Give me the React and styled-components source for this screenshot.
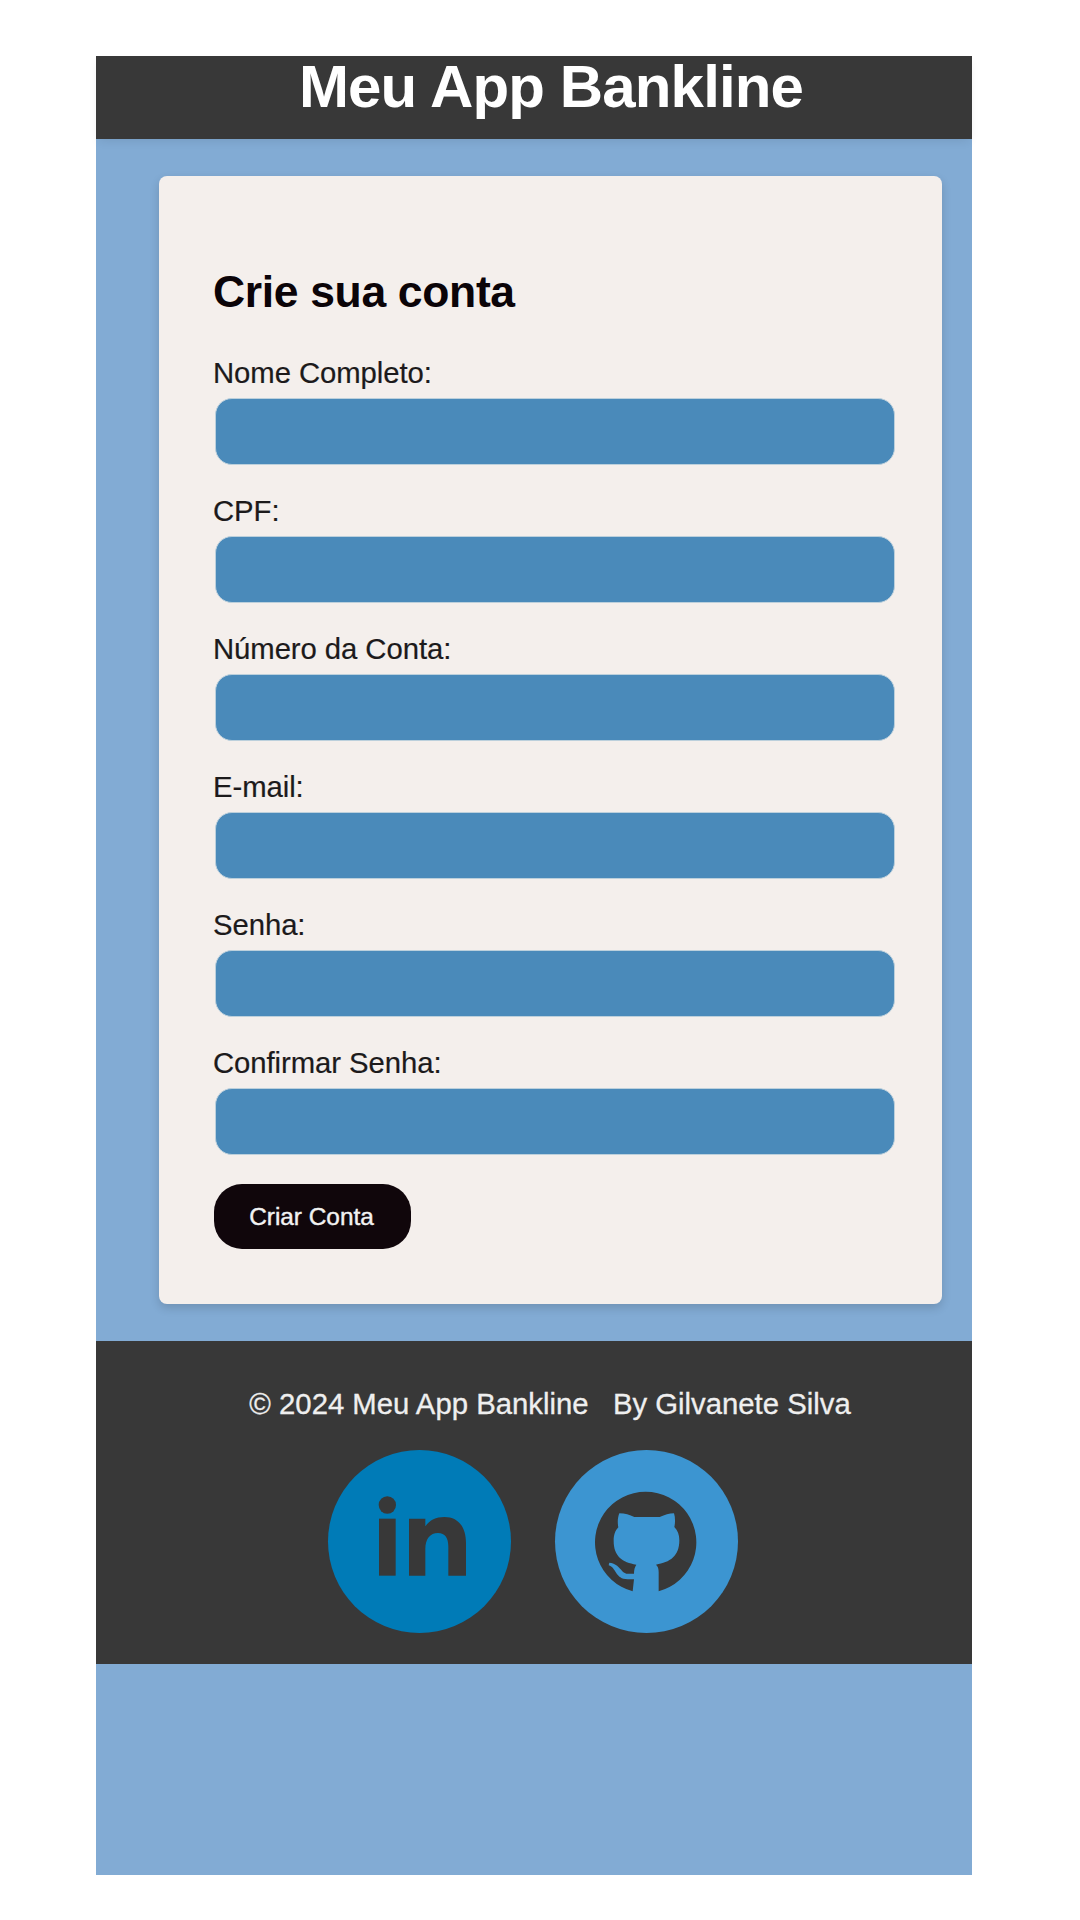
import React from "react";
import styled, { createGlobalStyle } from "styled-components";

const GlobalStyle = createGlobalStyle`
  * { box-sizing: border-box; }
  body {
    margin: 0;
    background: #fff;
    font-family: "Liberation Sans", Arial, sans-serif;
  }
`;

const Page = styled.div`
  display: flex;
  flex-direction: column;
  width: 876px;
  height: 1819px;
  margin: 56px 0 0 96px;
  background: #82abd4;
`;

const Header = styled.header`
  flex: none;
  height: 83px;
  padding: 1px 0 0 34px;
  background: #383838;
  box-shadow: 0 4px 10px -3px rgba(0, 0, 0, 0.1);
  text-align: center;
`;

const Title = styled.h1`
  margin: 0;
  color: #fff;
  font-size: 60px;
  line-height: 60px;
  letter-spacing: -0.85px;
`;

const Card = styled.form`
  flex: none;
  display: flex;
  flex-direction: column;
  align-items: flex-start;
  width: 783px;
  height: 1128px;
  margin: 37px 0 37px 63px;
  padding: 91px 47px 0 54px;
  border-radius: 8px;
  background: #f4efec;
  box-shadow: 0 4px 10px rgba(0, 0, 0, 0.15);
`;

const Heading = styled.h2`
  margin: 0 0 39px;
  color: #0b0408;
  font-size: 44.5px;
  line-height: 50px;
  letter-spacing: -0.35px;
`;

const Field = styled.div`
  display: flex;
  flex-direction: column;
  gap: 8px;
  width: 100%;
  margin-bottom: 28px;
`;

const Label = styled.label`
  color: #1c1a1b;
  font-size: 29.3px;
  line-height: 34px;
  letter-spacing: -0.07px;
  -webkit-text-stroke: 0.2px #1c1a1b;
`;

const Input = styled.input`
  width: 680px;
  height: 67px;
  margin: 0 0 1px 2px;
  padding: 0 18px;
  border: 1px solid #bcd0dc;
  border-radius: 17px;
  background: #4a8aba;
  font: inherit;
  font-size: 24px;
`;

const Submit = styled.button`
  width: 197px;
  height: 65px;
  margin-left: 1px;
  padding: 0 2px 0 0;
  border: 0;
  border-radius: 28px;
  background: #10060b;
  color: #f2f2f2;
  font-family: inherit;
  font-size: 24.4px;
  -webkit-text-stroke: 0.4px #f2f2f2;
`;

const Footer = styled.footer`
  flex: none;
  display: flex;
  flex-direction: column;
  align-items: center;
  height: 323px;
  padding-top: 46px;
  background: #383838;
`;

const Credit = styled.p`
  margin: 0;
  padding-left: 32px;
  color: #efefef;
  font-size: 29.3px;
  line-height: 34px;
  white-space: pre;
  -webkit-text-stroke: 0.3px #efefef;
`;

const Socials = styled.nav`
  display: flex;
  gap: 44px;
  margin: 29px 2px 0 0;
`;

const Badge = styled.a`
  display: block;
  width: 183px;
  height: 183px;
  border-radius: 50%;
  background: ${(p) => p.$color};

  svg {
    display: block;
    width: 100%;
    height: 100%;
    fill: #383838;
  }
`;

const fields = [
  ["nome", "Nome Completo:", "text"],
  ["cpf", "CPF:", "text"],
  ["conta", "Número da Conta:", "text"],
  ["email", "E-mail:", "email"],
  ["senha", "Senha:", "password"],
  ["confirmar", "Confirmar Senha:", "password"],
];

const LinkedInMark = () => (
  <svg viewBox="0 0 549 549">
    <circle cx="178" cy="165" r="26" />
    <rect x="153" y="206" width="50" height="171" />
    <path d="M243 206H292V229C304 211 324 201 349 201C392 201 414 232 414 280V377H361V290C361 264 351 249 330 249C306 249 292 267 292 296V377H243Z" />
  </svg>
);

const GitHubMark = () => (
  <svg viewBox="0 0 549 549">
    <path
      transform="translate(90 89)"
      d="M143 335A152 152 0 1 1 221 335V278C221 267 219 260 213 255C255 248 283 230 283 182C283 165 278 152 268 142C271 128 271 114 267 101C252 101 240 106 224 112H148C134 106 120 101 103 101C98 114 97 128 100 143C90 154 86 166 86 184C86 230 112 248 154 255C149 262 147 271 147 282H128C108 282 106 252 73 249L71 257C94 263 90 299 128 299H147Z"
    />
  </svg>
);

export default function App() {
  return (
    <>
      <GlobalStyle />
      <Page>
        <Header>
          <Title>Meu App Bankline</Title>
        </Header>
        <Card>
          <Heading>Crie sua conta</Heading>
          {fields.map(([id, text, type]) => (
            <Field key={id}>
              <Label htmlFor={id}>{text}</Label>
              <Input id={id} type={type} />
            </Field>
          ))}
          <Submit type="button">Criar Conta</Submit>
        </Card>
        <Footer>
          <Credit>{"© 2024 Meu App Bankline\u00a0\u00a0 By Gilvanete Silva"}</Credit>
          <Socials>
            <Badge href="#" $color="#007bb7" aria-label="LinkedIn">
              <LinkedInMark />
            </Badge>
            <Badge href="#" $color="#3c95d1" aria-label="GitHub">
              <GitHubMark />
            </Badge>
          </Socials>
        </Footer>
      </Page>
    </>
  );
}
